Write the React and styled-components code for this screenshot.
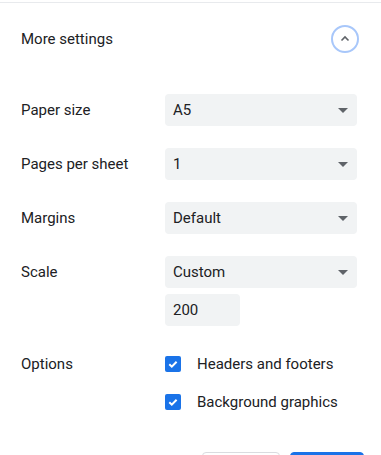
import React from "react";
import styled, { createGlobalStyle } from "styled-components";

const GlobalStyle = createGlobalStyle`
  body {
    margin: 0;
    background: #fff;
    font-family: Roboto, "Liberation Sans", sans-serif;
    color: #202124;
  }
`;

const Panel = styled.div`
  width: 381px;
  height: 455px;
  overflow: hidden;
  padding-top: 2px;
  box-sizing: border-box;
`;

const Divider = styled.div`
  height: 1px;
  background: #e8eaed;
`;

// 상단 "More settings" 헤더
const Header = styled.div`
  height: 72px;
  display: flex;
  align-items: center;
  justify-content: space-between;
  padding: 0 22px 0 21px;
  font-size: 15px;
`;

const CollapseButton = styled.button`
  width: 28px;
  height: 28px;
  border-radius: 50%;
  border: 2px solid #a8c7fa;
  background: #fff;
  padding: 0;
  display: flex;
  align-items: center;
  justify-content: center;
`;

const Rows = styled.div`
  display: flex;
  flex-direction: column;
  gap: 22px;
  padding: 19px 24px 0 21px;
`;

const Row = styled.div`
  display: grid;
  grid-template-columns: 144px 192px;
  align-items: start;
`;

const Label = styled.div`
  font-size: 15px;
  line-height: 32px;
`;

const Controls = styled.div`
  display: flex;
  flex-direction: column;
  gap: ${(p) => p.gap || 6}px;
`;

const Select = styled.div`
  height: 32px;
  border-radius: 4px;
  background: #f1f3f4;
  display: flex;
  align-items: center;
  justify-content: space-between;
  padding: 0 9px 0 8px;
  font-size: 15px;
`;

const Arrow = styled.span`
  width: 0;
  height: 0;
  border-left: 5px solid transparent;
  border-right: 5px solid transparent;
  border-top: 5px solid #5f6368;
`;

const NumberInput = styled.div`
  width: 75px;
  height: 32px;
  box-sizing: border-box;
  border-radius: 4px;
  background: #f1f3f4;
  padding-left: 8px;
  font-size: 15px;
  line-height: 32px;
`;

const CheckRow = styled.div`
  height: 32px;
  display: flex;
  align-items: center;
  gap: 16px;
  font-size: 15px;
`;

const Box = styled.span`
  width: 16px;
  height: 16px;
  border-radius: 2px;
  background: #1a73e8;
  display: flex;
  align-items: center;
  justify-content: center;
`;

const Footer = styled.div`
  display: flex;
  justify-content: flex-end;
  gap: 10px;
  padding: 34px 17px 0 0;
`;

const Button = styled.button`
  height: 32px;
  width: ${(p) => p.w}px;
  border-radius: 4px;
  font-family: inherit;
  font-size: 14px;
  font-weight: 500;
  border: 1px solid ${(p) => (p.primary ? "#1a73e8" : "#dadce0")};
  background: ${(p) => (p.primary ? "#1a73e8" : "#fff")};
  color: ${(p) => (p.primary ? "#fff" : "#1a73e8")};
`;

const Check = () => (
  <Box>
    <svg width="12" height="12" viewBox="0 0 12 12">
      <path d="M2.3 6.2l2.5 2.4 4.8-4.9" fill="none" stroke="#fff" strokeWidth="2" />
    </svg>
  </Box>
);

const selects = [
  { label: "Paper size", value: "A5" },
  { label: "Pages per sheet", value: "1" },
  { label: "Margins", value: "Default" },
];

const App = () => (
  <Panel>
    <GlobalStyle />
    <Divider />
    <Header>
      <span>More settings</span>
      <CollapseButton>
        <svg width="12" height="12" viewBox="0 0 12 12">
          <path d="M2.5 7.5L6 4l3.5 3.5" fill="none" stroke="#5f6368" strokeWidth="1.6" />
        </svg>
      </CollapseButton>
    </Header>
    <Rows>
      {selects.map((s) => (
        <Row key={s.label}>
          <Label>{s.label}</Label>
          <Select>
            {s.value}
            <Arrow />
          </Select>
        </Row>
      ))}
      <Row>
        <Label>Scale</Label>
        <Controls>
          <Select>
            Custom
            <Arrow />
          </Select>
          <NumberInput>200</NumberInput>
        </Controls>
      </Row>
      <Row>
        <Label>Options</Label>
        <Controls>
          <CheckRow>
            <Check />
            Headers and footers
          </CheckRow>
          <CheckRow>
            <Check />
            Background graphics
          </CheckRow>
        </Controls>
      </Row>
    </Rows>
    <Footer>
      <Button w={78}>Cancel</Button>
      <Button w={74} primary>
        Save
      </Button>
    </Footer>
  </Panel>
);

export default App;
